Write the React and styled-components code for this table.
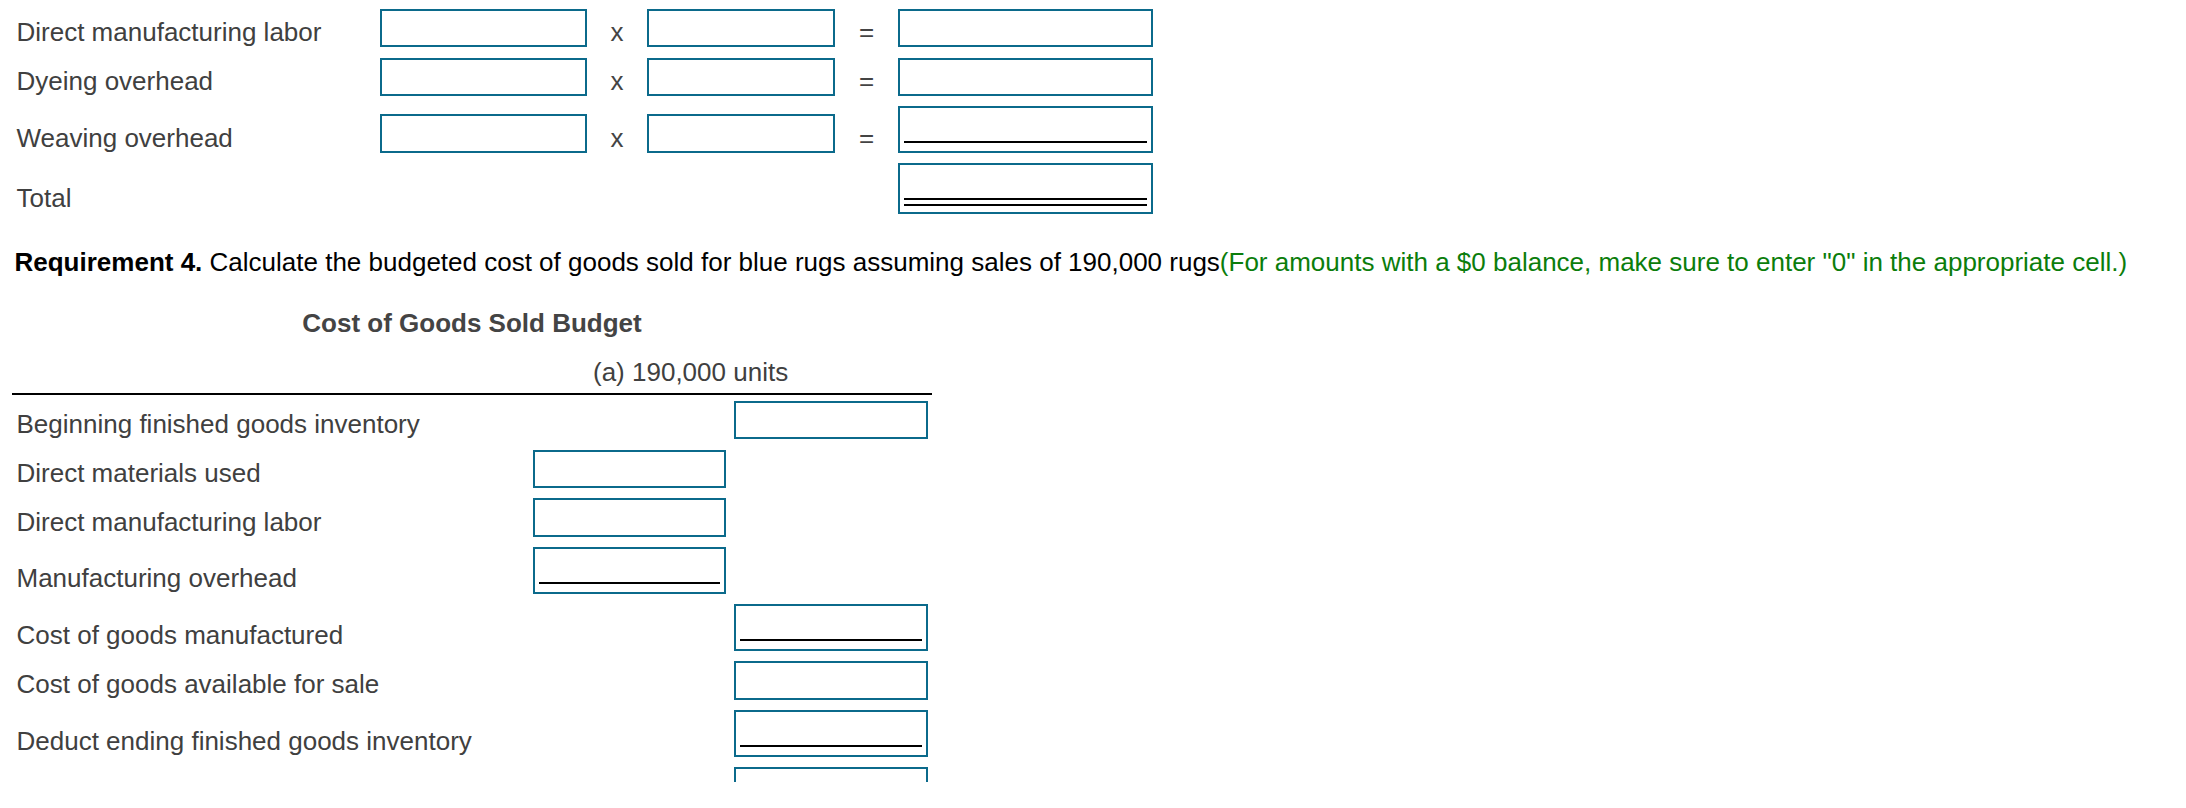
import React from "react"
import styled, { createGlobalStyle } from "styled-components"

const teal = "#0b6a8b"

const boxHeights = { none: 38.6, single: 46.6, double: 50.6 }

const calcRows = [
  { label: "Direct manufacturing labor" },
  { label: "Dyeing overhead" },
  { label: "Weaving overhead", rule: "single" },
]

const budgetRows = [
  { label: "Beginning finished goods inventory", col: 2 },
  { label: "Direct materials used", col: 1 },
  { label: "Direct manufacturing labor", col: 1 },
  { label: "Manufacturing overhead", col: 1, rule: "single" },
  { label: "Cost of goods manufactured", col: 2, rule: "single" },
  { label: "Cost of goods available for sale", col: 2 },
  { label: "Deduct ending finished goods inventory", col: 2, rule: "single" },
  { label: "", col: 2 },
]

const Field = ({ width, rule, column }) => (
  <Box $width={width} $rule={rule} $column={column}>
    {rule === "single" && <SingleRule />}
    {rule === "double" && <DoubleRule />}
  </Box>
)

const App = () => {
  return (
    <>
      <GlobalStyle />
      <Page>
        <CalcGrid>
          {calcRows.map(row => (
            <React.Fragment key={row.label}>
              <Label>{row.label}</Label>
              <Field width={207} />
              <Op>x</Op>
              <Field width={188} />
              <Op>=</Op>
              <Field width={255} rule={row.rule} />
            </React.Fragment>
          ))}
          <Label>Total</Label>
          <Field width={255} rule="double" column={6} />
        </CalcGrid>

        <Requirement>
          <strong>Requirement 4.</strong> Calculate the budgeted cost of goods
          sold for blue rugs assuming sales of 190,000 rugs
          <Hint>
            (For amounts with a $0 balance, make sure to enter "0" in the
            appropriate cell.)
          </Hint>
        </Requirement>

        <BudgetTitle>Cost of Goods Sold Budget</BudgetTitle>
        <ColumnHeader>(a) 190,000 units</ColumnHeader>

        <BudgetGrid>
          {budgetRows.map((row, i) => (
            <React.Fragment key={i}>
              <Label>{row.label}</Label>
              <Field
                width={row.col === 1 ? 193 : 194}
                rule={row.rule}
                column={row.col + 1}
              />
            </React.Fragment>
          ))}
        </BudgetGrid>
      </Page>
    </>
  )
}

export default App

const GlobalStyle = createGlobalStyle`
  body {
    margin: 0;
    background: #fff;
    font-family: "Liberation Sans", Arial, sans-serif;
  }
`

const Page = styled.div`
  box-sizing: border-box;
  height: 782px;
  overflow: hidden;
  padding: 8.7px 0 0 12px;
  font-size: 26px;
  line-height: 30px;
  color: #404040;
`

const CalcGrid = styled.div`
  display: grid;
  grid-template-columns: 368px 207px 60px 188px 63px 255px;
  row-gap: 10.3px;
  align-items: end;
`

const BudgetGrid = styled.div`
  display: grid;
  width: 920px;
  grid-template-columns: 517px 201px 202px;
  row-gap: 10.3px;
  align-items: end;
  margin-top: 6px;
`

const Label = styled.div`
  grid-column: 1;
  padding: 0 0 0.5px 4.5px;
  white-space: nowrap;
`

const Op = styled.div`
  text-align: center;
  padding-bottom: 0.5px;
  color: #444;
`

const Box = styled.div`
  box-sizing: border-box;
  width: ${p => p.$width}px;
  height: ${p => boxHeights[p.$rule || "none"]}px;
  border: 2px solid ${teal};
  padding: 0 4px ${p => (p.$rule === "double" ? 6 : 8)}px;
  display: flex;
  flex-direction: column;
  justify-content: flex-end;
  justify-self: center;
  ${p => p.$column && `grid-column: ${p.$column};`}
`

const SingleRule = styled.div`
  height: 2px;
  background: #000;
`

const DoubleRule = styled.div`
  box-sizing: border-box;
  height: 8px;
  border-top: 2px solid #000;
  border-bottom: 2px solid #000;
`

const Requirement = styled.p`
  margin: 32.8px 0 0;
  padding-left: 2.5px;
  color: #000;
  white-space: nowrap;
  strong {
    font-weight: bold;
  }
`

const Hint = styled.span`
  color: #0b7d0b;
`

const BudgetTitle = styled.h3`
  width: 920px;
  margin: 31.5px 0 0;
  font-size: 26px;
  line-height: 30px;
  font-weight: bold;
  text-align: center;
  color: #444;
`

const ColumnHeader = styled.div`
  width: 920px;
  box-sizing: border-box;
  margin-top: 18.7px;
  padding: 0 0 5.7px 581px;
  border-bottom: 2px solid #000;
`
